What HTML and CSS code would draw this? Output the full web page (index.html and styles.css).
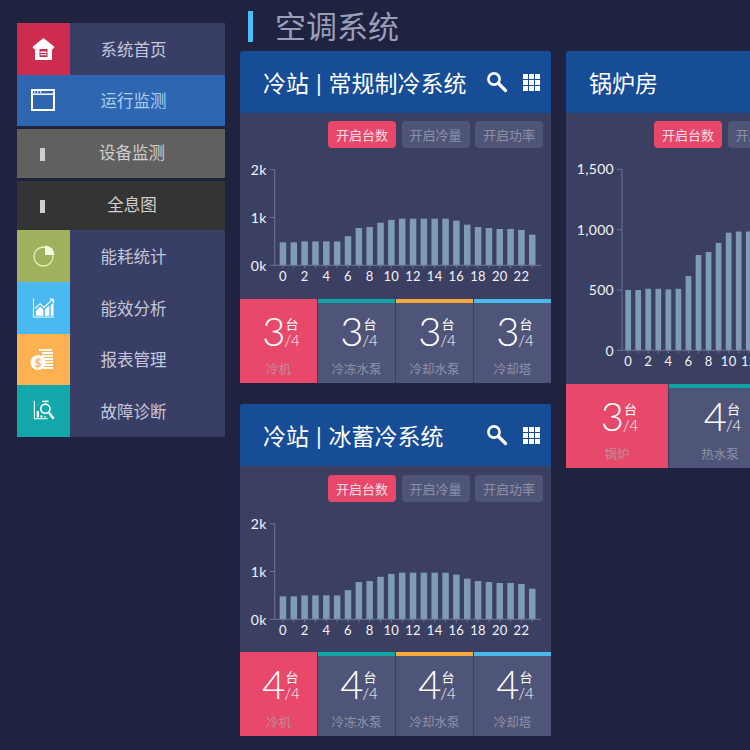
FILE: index.html
```html
<!DOCTYPE html>
<html lang="zh-CN">

<head>
  <meta charset="UTF-8">
  <title>空调系统</title>
  <link rel="stylesheet" href="styles.css">
</head>

<body>
  <!-- 左侧菜单 -->
  <ul class="nav">
    <li class="nav-item">
      <span class="nav-icon bg-red">
        <svg width="23" height="24" viewBox="0 0 23 24">
          <path fill="#fff" stroke="#fff" stroke-linejoin="round" d="M11.5 1.5 L22 10 L20.5 12 L19.5 11.2 V22.5 H3.5 V11.2 L2.5 12 L1 10 Z" />
          <path fill="#ce2c4e" d="M7.5 12 H15.5 V20 H7.5 Z" />
          <path fill="#fff" d="M8.5 14.5 H14.5 V16 H8.5 Z M8.5 17 H14.5 V18.2 H8.5 Z" />
        </svg>
      </span>
      <span class="nav-text">系统首页</span>
    </li>
    <li class="nav-item active">
      <span class="nav-icon">
        <svg class="icon-left" width="24" height="22" viewBox="0 0 24 22">
          <rect x="1" y="1" width="22" height="20" fill="none" stroke="#fff" stroke-width="2" />
          <path stroke="#fff" stroke-width="1.5" d="M1 5.2 H23" />
          <path stroke="#fff" stroke-width="1.4" d="M3 3 H4.4 M6 3 H7.4 M9 3 H10.4" />
        </svg>
      </span>
      <span class="nav-text">运行监测</span>
    </li>
    <li class="nav-item sub grey">
      <span class="nav-icon"><i class="nav-bar"></i></span>
      <span class="nav-text">设备监测</span>
    </li>
    <li class="nav-item sub dark">
      <span class="nav-icon"><i class="nav-bar"></i></span>
      <span class="nav-text">全息图</span>
    </li>
    <li class="nav-item">
      <span class="nav-icon bg-green">
        <svg width="22" height="22" viewBox="0 0 22 22">
          <circle cx="10.5" cy="11.5" r="9.5" fill="none" stroke="#e6f0b8" stroke-width="1.3" />
          <path fill="#f4f7e2" d="M12 0.5 A9.5 9.5 0 0 1 21.5 10 H12 Z" />
        </svg>
      </span>
      <span class="nav-text">能耗统计</span>
    </li>
    <li class="nav-item">
      <span class="nav-icon bg-sky">
        <svg width="23" height="22" viewBox="0 0 24 22">
          <path fill="none" stroke="#fff" stroke-width="1" d="M1.5 1 V20.5 H23" />
          <path fill="#fff" d="M4 19 V14 L8.5 9.5 L12 13 V19 Z M13.5 19 V12.5 L18 8.5 V19 Z M19.5 19 V8 L22.5 5.5 V19 Z" />
          <path fill="none" stroke="#fff" stroke-width="1.2" d="M3 11.5 L8.5 6.5 L12.5 10.5 L20.5 3" />
          <path fill="#fff" d="M18 1 H23 V6 Z" />
        </svg>
      </span>
      <span class="nav-text">能效分析</span>
    </li>
    <li class="nav-item short">
      <span class="nav-icon bg-orange">
        <svg class="icon-coin" width="24" height="24" viewBox="0 0 24 24">
          <path fill="#fff" d="M9 1 H22 V3 H9 Z M12 4 H23 V6 H12 Z M12 7 H23 V9 H12 Z M14 10 H23 V12 H14 Z M15 13 H23 V15 H15 Z M15 16 H23 V18 H15 Z M13 19 H23 V21 H13 Z" />
          <circle cx="8" cy="14.5" r="7.5" fill="#fff" />
          <text class="coin" x="8" y="18.5" text-anchor="middle">$</text>
        </svg>
      </span>
      <span class="nav-text">报表管理</span>
    </li>
    <li class="nav-item">
      <span class="nav-icon bg-teal">
        <svg width="22" height="22" viewBox="0 0 24 24">
          <path fill="none" stroke="#fff" stroke-width="1.2" d="M1.5 1 V20.5 H16" />
          <path fill="#fff" d="M4 19 V12 H6.5 V19 Z M8 19 V17 H10.5 V19 Z M12 19 V18 H14.5 V19 Z" />
          <circle cx="13.5" cy="9.5" r="5" fill="none" stroke="#fff" stroke-width="1.8" />
          <path stroke="#fff" stroke-width="1.6" d="M10 1.5 H17" />
          <path stroke="#fff" stroke-width="2.6" d="M17.5 14 L22.5 20.5" />
        </svg>
      </span>
      <span class="nav-text">故障诊断</span>
    </li>
  </ul>

  <div class="main">
    <h1 class="title">空调系统</h1>
    <div class="columns">
      <div class="column">
        <div class="card">
          <div class="card-head">
            <h2 class="card-title">冷站 | 常规制冷系统</h2>
            <svg class="tool" width="22" height="22" viewBox="0 0 22 22">
              <circle cx="8" cy="8" r="5.6" fill="none" stroke="#fff" stroke-width="2.6" />
              <path stroke="#fff" stroke-width="3.2" stroke-linecap="round" d="M12.5 12.5 L19.5 19.5" />
            </svg>
            <span class="grid-icon"><i></i><i></i><i></i><i></i><i></i><i></i><i></i><i></i><i></i></span>
          </div>
          <div class="tabs">
            <span class="tab current">开启台数</span>
            <span class="tab">开启冷量</span>
            <span class="tab">开启功率</span>
          </div>
          <svg class="chart" data-type="k" width="311" height="151"></svg>
          <div class="stats">
            <div class="stat hot"><div class="num"><b>3</b><span class="of"><em>台</em><em class="total">/4</em></span></div><p>冷机</p></div>
            <div class="stat teal"><div class="num"><b>3</b><span class="of"><em>台</em><em class="total">/4</em></span></div><p>冷冻水泵</p></div>
            <div class="stat orange"><div class="num"><b>3</b><span class="of"><em>台</em><em class="total">/4</em></span></div><p>冷却水泵</p></div>
            <div class="stat sky"><div class="num"><b>3</b><span class="of"><em>台</em><em class="total">/4</em></span></div><p>冷却塔</p></div>
          </div>
        </div>

        <div class="card second">
          <div class="card-head">
            <h2 class="card-title">冷站 | 冰蓄冷系统</h2>
            <svg class="tool" width="22" height="22" viewBox="0 0 22 22">
              <circle cx="8" cy="8" r="5.6" fill="none" stroke="#fff" stroke-width="2.6" />
              <path stroke="#fff" stroke-width="3.2" stroke-linecap="round" d="M12.5 12.5 L19.5 19.5" />
            </svg>
            <span class="grid-icon"><i></i><i></i><i></i><i></i><i></i><i></i><i></i><i></i><i></i></span>
          </div>
          <div class="tabs">
            <span class="tab current">开启台数</span>
            <span class="tab">开启冷量</span>
            <span class="tab">开启功率</span>
          </div>
          <svg class="chart" data-type="k" width="311" height="150"></svg>
          <div class="stats">
            <div class="stat hot"><div class="num"><b>4</b><span class="of"><em>台</em><em class="total">/4</em></span></div><p>冷机</p></div>
            <div class="stat teal"><div class="num"><b>4</b><span class="of"><em>台</em><em class="total">/4</em></span></div><p>冷冻水泵</p></div>
            <div class="stat orange"><div class="num"><b>4</b><span class="of"><em>台</em><em class="total">/4</em></span></div><p>冷却水泵</p></div>
            <div class="stat sky"><div class="num"><b>4</b><span class="of"><em>台</em><em class="total">/4</em></span></div><p>冷却塔</p></div>
          </div>
        </div>
      </div>

      <div class="column wide">
        <div class="card">
          <div class="card-head">
            <h2 class="card-title">锅炉房</h2>
          </div>
          <div class="tabs left">
            <span class="tab current">开启台数</span>
            <span class="tab">开启冷量</span>
            <span class="tab">开启功率</span>
          </div>
          <svg class="chart" data-type="full" width="411" height="236"></svg>
          <div class="stats">
            <div class="stat hot"><div class="num"><b>3</b><span class="of"><em>台</em><em class="total">/4</em></span></div><p>锅炉</p></div>
            <div class="stat teal"><div class="num"><b>4</b><span class="of"><em>台</em><em class="total">/4</em></span></div><p>热水泵</p></div>
            <div class="stat orange"><div class="num"><b>4</b><span class="of"><em>台</em><em class="total">/4</em></span></div><p>补水泵</p></div>
            <div class="stat sky"><div class="num"><b>4</b><span class="of"><em>台</em><em class="total">/4</em></span></div><p>循环泵</p></div>
          </div>
        </div>
      </div>
    </div>
  </div>

  <script src="chart.js"></script>
</body>

</html>
```

FILE: styles.css
```css
* {
  padding: 0;
  margin: 0;
  box-sizing: border-box;
}

body {
  display: flex;
  width: 750px;
  height: 750px;
  overflow: hidden;
  background-color: #1f2340;
  font-family: "Lato", "Noto Sans CJK SC", sans-serif;
}

/* 左侧菜单 */
.nav {
  list-style: none;
  flex: none;
  width: 208px;
  margin: 23px 15px 0 17px;
  align-self: flex-start;
}

.nav-item {
  display: flex;
  align-items: center;
  height: 52px;
  background-color: #383e66;
  color: #c5c8d8;
  font-size: 16.5px;
}

.nav-item.short {
  height: 51px;
}

.nav-icon {
  display: flex;
  flex: none;
  align-items: center;
  justify-content: center;
  width: 53px;
  height: 100%;
}

.nav-text {
  flex: 1;
  margin-top: -1px;
  padding-right: 28px;
  text-align: center;
}

.nav-bar {
  display: block;
  width: 5px;
  height: 13px;
  margin: 1px 2px 0 0;
  background-color: #cfcfcf;
}

.icon-left {
  margin: -2px 2px 0 0;
}

.icon-coin {
  margin-right: 4px;
}

.nav-item.active {
  height: 51px;
  background-color: #2e66b1;
  color: #a9cdf0;
}

.nav-item.sub {
  height: 49px;
  margin-top: 3px;
  color: #d0d0d0;
}

.nav-item.sub .nav-text {
  margin-top: -3px;
  padding-right: 31px;
}

.grey {
  background-color: #61605f !important;
}

.dark {
  background-color: #343434 !important;
}

.bg-red {
  background-color: #ce2c4e;
}

.bg-green {
  background-color: #9eb25e;
}

.bg-sky {
  background-color: #4ab9f2;
}

.bg-orange {
  background-color: #fdb151;
}

.bg-teal {
  background-color: #12a8ab;
}

.coin {
  font-size: 12px;
  font-weight: 700;
  fill: #fdb151;
}

/* 右侧内容 */
.main {
  flex: none;
  width: 737px;
}

.title {
  display: flex;
  align-items: center;
  height: 51px;
  padding: 2px 0 0 8px;
  color: #9a9fb8;
  font-size: 31px;
  font-weight: 400;
  line-height: 1;
}

.title::before {
  content: "";
  width: 5px;
  height: 31px;
  margin-right: 22px;
  background-color: #4ebcf5;
}

.columns {
  display: flex;
  gap: 15px;
}

.column {
  display: flex;
  flex: none;
  flex-direction: column;
  gap: 21px;
  width: 311px;
}

.column.wide {
  width: 411px;
}

.card {
  overflow: hidden;
  background-color: #3b4062;
  border-radius: 3px 3px 0 0;
}

.card-head {
  display: flex;
  align-items: center;
  height: 62px;
  padding: 0 11px 0 23px;
  background-color: #174d97;
  color: #fff;
}

.card-title {
  flex: 1;
  font-size: 23px;
  font-weight: 400;
  word-spacing: 1px;
  white-space: nowrap;
}

.tool {
  margin-right: 15px;
}

.grid-icon {
  display: grid;
  grid-template-columns: repeat(3, 5px);
  grid-auto-rows: 5px;
  gap: 1px;
  margin-top: 1px;
}

.grid-icon i {
  background-color: #fff;
}

.tabs {
  display: flex;
  justify-content: flex-end;
  gap: 5.5px;
  padding: 8px 8px 0 0;
  height: 35px;
}

.second .tabs {
  height: 36px;
  padding-top: 9px;
}

.tabs.left {
  justify-content: flex-start;
  padding-left: 88px;
}

.tab {
  flex: none;
  width: 68px;
  height: 27px;
  background-color: #4f5576;
  border-radius: 4px;
  color: #8b90a8;
  font-size: 13px;
  line-height: 28px;
  text-align: center;
}

.tab.current {
  background-color: #e8476a;
  color: #f6dfe4;
}

.chart {
  display: block;
}

.chart text {
  fill: #f2f4fa;
  font-size: 13px;
  letter-spacing: .3px;
}

.chart .tick {
  font-size: 14px;
}

.stats {
  display: flex;
  gap: 1px;
  height: 84px;
  background-color: #3b4062;
}

.stat {
  flex: 1;
  min-width: 0;
  padding-top: 12px;
  background-color: #4f5579;
  border-top: 4px solid transparent;
  color: #fff;
  text-align: center;
}

.stat.hot {
  background-color: #e8486a;
  border-top-color: #e8486a;
}

.stat.teal {
  border-top-color: #10a5a5;
}

.stat.orange {
  border-top-color: #f7a93e;
}

.stat.sky {
  border-top-color: #4ab9ee;
}

.num {
  display: flex;
  justify-content: center;
  height: 37px;
  padding-left: 5px;
}

.num b {
  font-size: 40px;
  font-weight: 300;
  line-height: 33px;
}

.of {
  display: flex;
  flex-direction: column;
  margin-left: -1px;
  font-size: 13px;
}

.of em {
  font-style: normal;
  line-height: 18px;
}

.of .total {
  font-size: 15px;
  font-weight: 300;
  line-height: 15px;
}

.stat p {
  margin-top: 9px;
  color: #8d93a8;
  font-size: 12.5px;
  line-height: 18px;
}

.stat.hot p {
  color: #bd8d9e;
}
```

FILE: chart.js
```js
// 24小时数据
var values = [480, 480, 500, 500, 500, 500, 610, 780, 800, 890, 950, 975, 975, 975, 975, 975, 935, 850, 800, 780, 760, 760, 740, 640];
var boiler = [500, 500, 510, 510, 505, 510, 615, 790, 815, 890, 975, 985, 985, 985, 985, 985, 935, 850, 800, 780, 760, 760, 740, 640];

var ns = 'http://www.w3.org/2000/svg';

function add(svg, name, attrs, txt) {
  var el = document.createElementNS(ns, name);
  for (var k in attrs) {
    el.setAttribute(k, attrs[k]);
  }
  if (txt !== undefined) {
    el.textContent = txt;
  }
  svg.appendChild(el);
}

// 冷站图表和锅炉房图表只有刻度不同
var types = {
  k: { data: values, left: 34.7, right: 301, base: 117.3, top: 21.7, perK: 47.8, step: 10.84, barW: 6.5, first: 39.7, labelY: 133, ticks: [[0, '0k'], [1000, '1k'], [2000, '2k']] },
  full: { data: boiler, left: 56, right: 420, base: 202.3, top: 21.3, perK: 120.6, step: 10.05, barW: 5.7, first: 59.3, labelY: 218, ticks: [[0, '0'], [500, '500'], [1000, '1,000'], [1500, '1,500']] }
};

var charts = document.querySelectorAll('.chart');
for (var c = 0; c < charts.length; c++) {
  var svg = charts[c];
  var t = types[svg.dataset.type];

  for (var i = 0; i < t.data.length; i++) {
    var h = t.data[i] / 1000 * t.perK;
    add(svg, 'rect', { x: t.first + i * t.step, y: t.base - h, width: t.barW, height: h, fill: '#7e9cb6' });
    var cx = t.first + t.barW / 2 + i * t.step;
    add(svg, 'path', { d: 'M' + cx + ' ' + t.base + 'V' + (t.base + 3), stroke: '#6d7395' });
    if (i % 2 === 0) {
      add(svg, 'text', { x: cx, y: t.labelY, 'text-anchor': 'middle' }, i);
    }
  }

  add(svg, 'path', { d: 'M' + t.left + ' ' + t.top + 'V' + t.base + 'H' + t.right, stroke: '#6d7395', fill: 'none' });

  for (var j = 0; j < t.ticks.length; j++) {
    var y = t.base - t.ticks[j][0] / 1000 * t.perK;
    add(svg, 'path', { d: 'M' + (t.left - 5) + ' ' + y + 'H' + t.left, stroke: '#6d7395' });
    // 0 刻度的文字略低一点
    add(svg, 'text', { class: 'tick', x: t.left - 8, y: y + (t.ticks[j][0] === 0 ? 6 : 5), 'text-anchor': 'end' }, t.ticks[j][1]);
  }
}
```
